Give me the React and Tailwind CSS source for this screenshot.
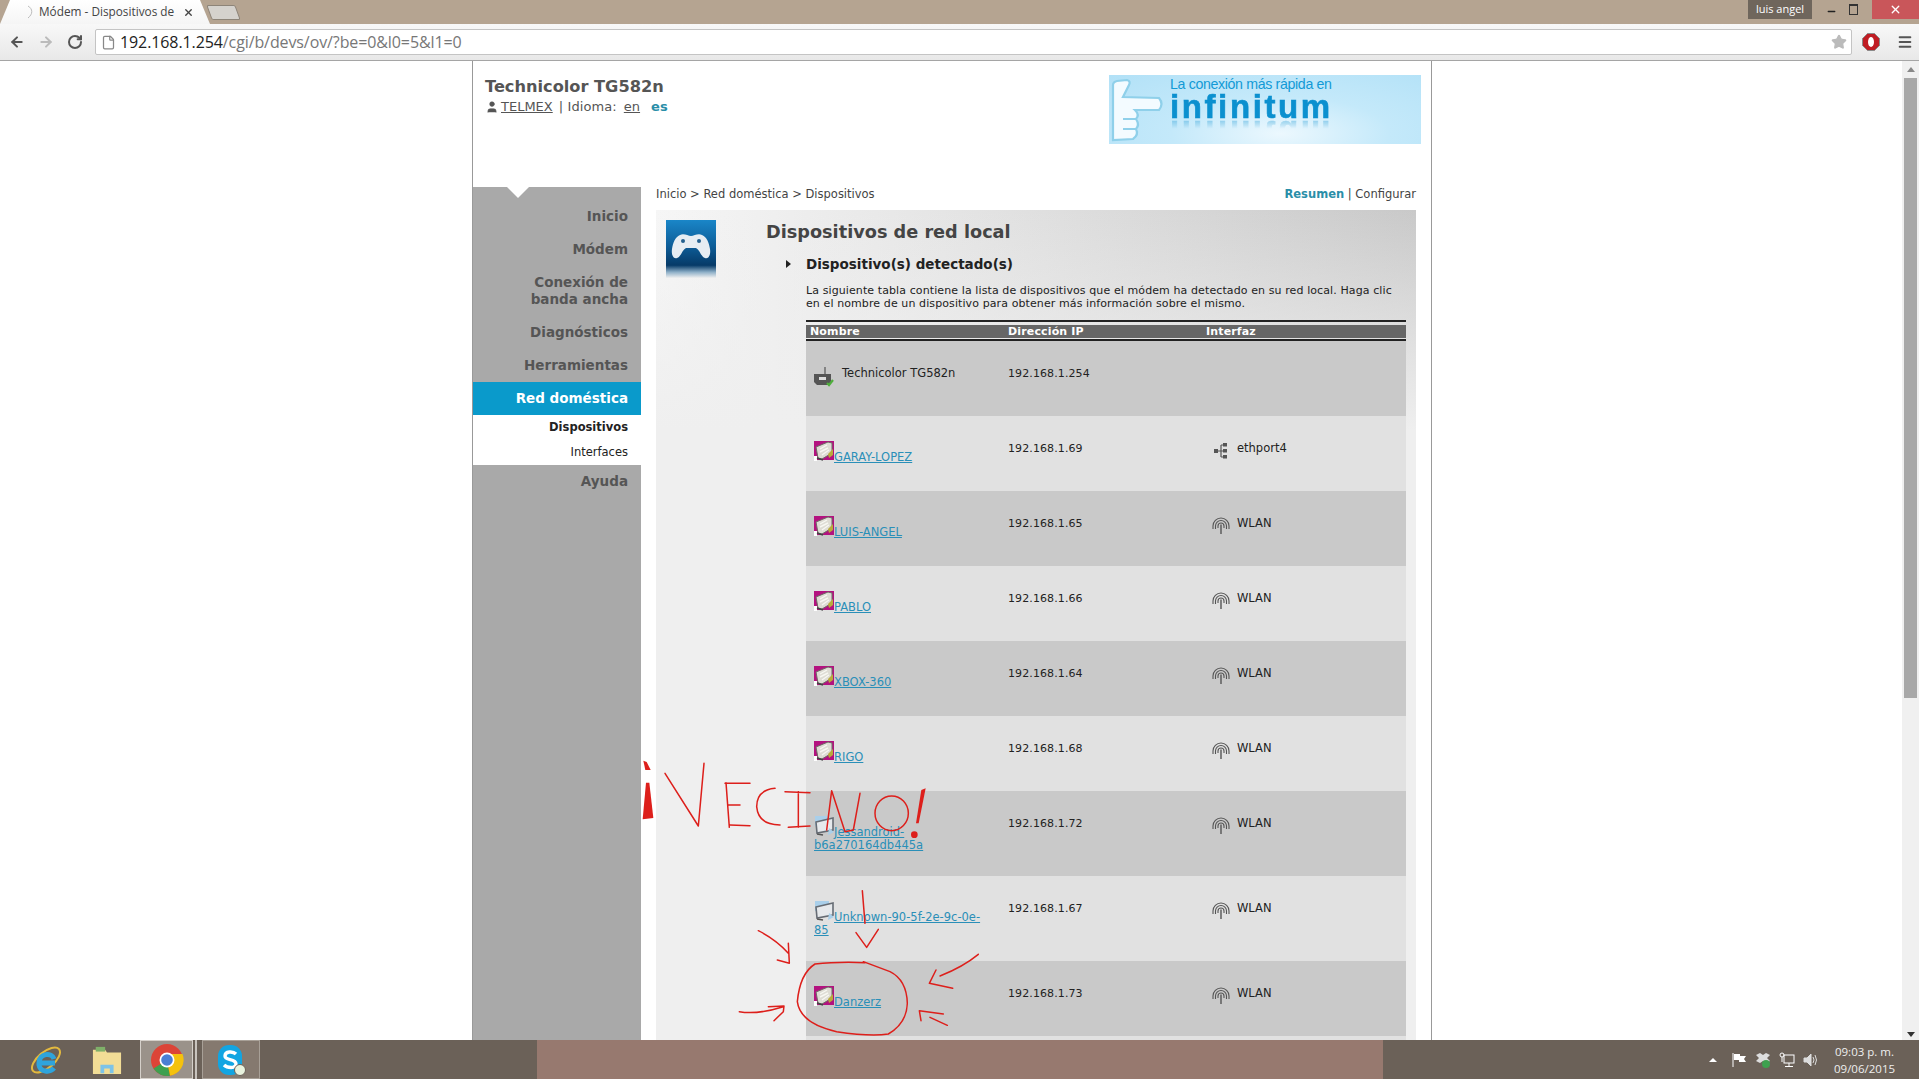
import { ArrowLeft, ArrowRight, RotateCw, File, Star, Menu, X, Minus, User } from 'lucide-react'

const SIDE_TOP = [
  { label: 'Inicio', h: 'h-[33px]' },
  { label: 'Módem', h: 'h-[33px]' },
  { label: 'Conexión de banda ancha', h: 'h-[50px]' },
  { label: 'Diagnósticos', h: 'h-[33px]' },
  { label: 'Herramientas', h: 'h-[33px]' },
]

const ROWS = [
  { name: 'GARAY-LOPEZ', ip: '192.168.1.69', iface: 'ethport4', h: 'h-[75px]' },
  { name: 'LUIS-ANGEL', ip: '192.168.1.65', iface: 'WLAN', h: 'h-[75px]' },
  { name: 'PABLO', ip: '192.168.1.66', iface: 'WLAN', h: 'h-[75px]' },
  { name: 'XBOX-360', ip: '192.168.1.64', iface: 'WLAN', h: 'h-[75px]' },
  { name: 'RIGO', ip: '192.168.1.68', iface: 'WLAN', h: 'h-[75px]' },
  { name: 'Jessandroid-b6a270164db445a', ip: '192.168.1.72', iface: 'WLAN', h: 'h-[85px]', unknown: true },
  { name: 'Unknown-90-5f-2e-9c-0e-85', ip: '192.168.1.67', iface: 'WLAN', h: 'h-[85px]', unknown: true },
  { name: 'Danzerz', ip: '192.168.1.73', iface: 'WLAN', h: 'h-[75px]' },
  { name: '', ip: '', iface: '', h: 'h-[75px]' },
]

function DeviceIcon() {
  return (
    <svg width="20" height="20" viewBox="0 0 20 20" className="inline align-baseline">
      <rect x="0" y="0" width="20" height="19" fill="#b3127f" />
      <rect x="0" y="15" width="3" height="5" fill="#fff" />
      <path d="M2 6 L14 1 L18 2 L18 12 L8 18 L4 17 Z" fill="#dedcd4" stroke="#6d6a64" strokeWidth="1" />
      <path d="M6 8 L13 4 M6 11 L14 7 M8 14 L15 9" stroke="#f7f7f2" strokeWidth="1.4" />
      <path d="M14 13 L19 8 L19 14 L15 17 Z" fill="#b9ab3c" />
      <path d="M3 17 L9 19" stroke="#444" strokeWidth="1.5" />
    </svg>
  )
}

function MonitorIcon() {
  return (
    <svg width="20" height="20" viewBox="0 0 20 20" className="inline align-baseline">
      <rect x="1" y="0" width="14" height="10" fill="#a9cfea" />
      <path d="M2 6 L19 2 L19 14 L3 17 Z" fill="#e6e9ec" stroke="#666c74" strokeWidth="1.6" />
      <path d="M15 12 L20 16 L14 19 Z" fill="#a9cfea" />
      <path d="M3 18 L9 19" stroke="#555" strokeWidth="1.5" />
    </svg>
  )
}

function RouterIcon() {
  return (
    <svg width="20" height="20" viewBox="0 0 20 20" className="shrink-0">
      <path d="M11 0 V7" stroke="#555" strokeWidth="1.2" />
      <path d="M0 7 H17 V15 L14 18 H3 L0 15 Z" fill="#555" />
      <rect x="5" y="10" width="7" height="3" fill="#ddd" />
      <path d="M13 16 L15 18 L19 13" stroke="#4fae3c" strokeWidth="2.2" fill="none" />
    </svg>
  )
}

function EthIcon() {
  return (
    <svg width="14" height="18" viewBox="0 0 14 18" className="shrink-0">
      <path d="M2 9 H7 M7 3 V15 M7 3 H11 M7 9 H11 M7 15 H11" stroke="#555" strokeWidth="1.2" fill="none" />
      <rect x="0" y="7" width="4" height="4" fill="#555" />
      <rect x="9" y="1" width="4" height="3.5" fill="#555" />
      <rect x="9" y="7" width="4" height="3.5" fill="#555" />
      <rect x="9" y="13" width="4" height="3.5" fill="#555" />
    </svg>
  )
}

function WlanIcon() {
  return (
    <svg width="18" height="17" viewBox="0 0 18 17" className="shrink-0" fill="none" stroke="#555">
      <path d="M1 12 V9 A8 8 0 0 1 17 9 V12" strokeWidth="1.1" />
      <path d="M3.5 12 V9 A5.5 5.5 0 0 1 14.5 9 V12" strokeWidth="1.1" />
      <path d="M6 11 V9 A3 3 0 0 1 12 9 V11" strokeWidth="1.1" />
      <path d="M9 7.5 V17" strokeWidth="1.4" />
    </svg>
  )
}

function GamepadTile() {
  return (
    <div className="w-[50px] h-[58px] bg-[linear-gradient(to_bottom,#1a86c8_0%,#0d5d98_45%,#063a68_78%,#8fb0c8_90%,#f0f0f0_100%)] flex justify-center pt-[13px]">
      <svg width="40" height="27" viewBox="0 0 40 27">
        <path d="M9 2 C13 0 17 3 20 3 C23 3 27 0 31 2 C36 4 38 10 39 16 C40 23 37 26 34 25 C30 24 29 17 25 15 H15 C11 17 10 24 6 25 C3 26 0 23 1 16 C2 10 4 4 9 2 Z" fill="#e6edf3" />
        <circle cx="12" cy="8" r="2" fill="#24608f" />
        <circle cx="28" cy="8" r="2" fill="#24608f" />
      </svg>
    </div>
  )
}

function Banner() {
  return (
    <div className="mt-[14px] w-[312px] h-[69px] flex bg-[radial-gradient(ellipse_at_55%_85%,#ecf8fe_0%,#c4e9fa_45%,#b2e1f7_100%)] shrink-0">
      <svg width="60" height="68" viewBox="0 0 60 68" className="shrink-0">
        <path d="M4 10 Q4 7 8 6 L18 5 Q22 6 20 10 L14 22 L50 23 Q55 29 50 35 L26 35 Q31 40 27 44 Q31 50 27 54 Q30 60 24 64 L4 65 Z" fill="#f3fbff" stroke="#8fd0ea" strokeWidth="2.2" />
        <path d="M14 44 H27 M14 54 H27" stroke="#8fd0ea" strokeWidth="2" />
      </svg>
      <div className="ml-[1px] font-['Liberation_Sans',sans-serif] text-[#129ad6] leading-none">
        <div className="text-[14.2px] tracking-[-0.35px] mt-[2px] whitespace-nowrap">La conexión más rápida en</div>
        <div className="w-fit text-[33px] font-bold tracking-[2.6px] mt-[2px] text-[#0b90cf] h-[28px] leading-[28px] [-webkit-text-stroke:0.6px_#0b90cf] [-webkit-box-reflect:below_-3px_linear-gradient(transparent_62%,rgba(255,255,255,0.45))]">infinitum</div>
      </div>
    </div>
  )
}

function TableRow({ row, shade }) {
  return (
    <div className={`grid grid-cols-[202px_198px_200px] ${row.h} ${shade ? 'bg-[#c9c9c9]' : 'bg-[#e1e1e1]'}`}>
      <div className="pl-[8px] pr-[16px] pt-[25px] leading-[13px]">
        {row.name && (row.unknown ? <MonitorIcon /> : <DeviceIcon />)}
        {row.name && <a className="text-[#2a8fb8] underline">{row.name}</a>}
      </div>
      <div className="pt-[26px] leading-[13px] text-[#222] text-[11px] tracking-[0.1px]">{row.ip}</div>
      <div className="pt-[26px] leading-[13px] text-[#222] flex items-start pl-[4px]">
        {row.iface && (
          <>
            <div className="w-[27px] flex justify-center pr-[6px]">
              {row.iface === 'WLAN' ? <WlanIcon /> : <EthIcon />}
            </div>
            {row.iface}
          </>
        )}
      </div>
    </div>
  )
}

function Content() {
  return (
    <div className="flex-1 px-[15px] pl-[15px] min-w-0">
      <div className="h-[23px] flex justify-between items-start text-[11.5px] leading-[14px] text-[#444]">
        <div>Inicio &gt; Red doméstica &gt; Dispositivos</div>
        <div>
          <span className="font-bold text-[#2a8ea8]">Resumen</span> | Configurar
        </div>
      </div>
      <div className="flex bg-[linear-gradient(to_bottom,rgba(240,240,240,0)_0,#efefef_220px),linear-gradient(to_right,#f6f6f6,#c9c9c9)] h-[900px]">
        <div className="w-[110px] pl-[10px] pt-[10px] shrink-0">
          <GamepadTile />
        </div>
        <div className="flex-1 min-w-0">
          <h1 className="text-[17.7px] font-bold text-[#444] leading-[20px] mt-[12px]">Dispositivos de red local</h1>
          <div className="flex items-center mt-[13px] ml-[20px] h-[18px]">
            <div className="w-0 h-0 border-y-[4px] border-y-transparent border-l-[5px] border-l-[#222]" />
            <h2 className="ml-[15px] text-[13.5px] font-bold text-[#222]">Dispositivo(s) detectado(s)</h2>
          </div>
          <div className="ml-[40px] mr-[10px] mt-[11px]">
            <p className="text-[11px] tracking-[0.1px] leading-[13px] text-[#222]">
              La siguiente tabla contiene la lista de dispositivos que el módem ha detectado en su red local. Haga clic en el nombre de un dispositivo para obtener más información sobre el mismo.
            </p>
            <div className="mt-[10px] border-t-2 border-[#222] pt-[2px]">
              <div className="grid grid-cols-[202px_198px_200px] h-[13px] bg-[#666] text-white font-bold text-[11px] tracking-[0.15px] leading-[13px] mt-[1px]">
                <div className="pl-[4px]">Nombre</div>
                <div>Dirección IP</div>
                <div>Interfaz</div>
              </div>
              <div className="border-b-2 border-[#222] h-[3px]" />
            </div>
            <div className="text-[11.5px]">
              <div className="h-[75px] bg-[#c9c9c9] grid grid-cols-[202px_198px_200px]">
                <div className="pl-[8px] pt-[26px] flex items-start text-[#222] leading-[13px]">
                  <RouterIcon />
                  <span className="ml-[8px]">Technicolor TG582n</span>
                </div>
                <div className="pt-[26px] leading-[13px] text-[#222] text-[11px] tracking-[0.1px]">192.168.1.254</div>
                <div />
              </div>
              {ROWS.map((r, i) => (
                <TableRow key={i} row={r} shade={i % 2 === 1} />
              ))}
            </div>
          </div>
        </div>
      </div>
    </div>
  )
}

function Sidebar() {
  return (
    <div className="w-[168px] bg-[#a9a9a9] relative shrink-0 h-[900px] text-right font-bold text-[13.5px] leading-[17px] text-[#555]">
      <div className="absolute left-[34px] top-0 w-0 h-0 border-x-[11px] border-x-transparent border-t-[11px] border-t-white" />
      <div className="h-[13px]" />
      {SIDE_TOP.map((s) => (
        <div key={s.label} className={`${s.h} flex items-center justify-end pr-[13px] pl-[40px]`}>
          {s.label}
        </div>
      ))}
      <div className="h-[33px] bg-[#0a9acb] text-white flex items-center justify-end pr-[13px]">Red doméstica</div>
      <div className="h-[50px] bg-white text-[#222] text-[11.5px]">
        <div className="h-[25px] flex items-center justify-end pr-[13px]">Dispositivos</div>
        <div className="h-[25px] flex items-center justify-end pr-[13px] font-normal">Interfaces</div>
      </div>
      <div className="h-[32px] flex items-center justify-end pr-[13px]">Ayuda</div>
    </div>
  )
}

function TitleBar() {
  return (
    <div className="h-[24px] bg-[#b5a491] flex font-['Open_Sans',sans-serif] shrink-0">
      <div className="w-[210px] h-full flex items-center bg-[linear-gradient(to_bottom,#ffffff,#f5f5f5)] [clip-path:polygon(10px_0,200px_0,210px_100%,0_100%)] pl-[27px]">
        <svg width="8" height="14" viewBox="0 0 8 14" fill="none" stroke="#bbb" strokeWidth="1">
          <path d="M1 1 C6 4 6 9 1 13" />
        </svg>
        <span className="ml-[4px] text-[11.8px] text-[#444] whitespace-nowrap">Módem - Dispositivos de</span>
        <X size={11} strokeWidth={3} className="ml-[9px] text-[#444]" />
      </div>
      <div className="ml-[-1px] mt-[5px] w-[29px] h-[15px] bg-[#d5d2cd] border border-[#8d8478] rounded-[2px] [transform:skewX(20deg)]" />
      <div className="flex-1" />
      <div className="w-[64px] h-[19px] bg-[#6f665c] text-white text-[11px] flex items-center justify-center">luis angel</div>
      <div className="w-[60px] h-[19px] flex items-center justify-center gap-[12px] text-[#222]">
        <Minus size={11} strokeWidth={3} className="mt-[4px]" />
        <div className="w-[9px] h-[11px] border border-[#333] border-t-2" />
      </div>
      <div className="w-[47px] h-[19px] bg-[#c9565a] text-white flex items-center justify-center">
        <X size={13} strokeWidth={2.5} />
      </div>
    </div>
  )
}

function Toolbar() {
  return (
    <div className="h-[37px] bg-[linear-gradient(to_bottom,#f8f8f8,#e8e8e8)] border-b border-[#a5a5a5] flex items-center shrink-0">
      <div className="w-[95px] flex items-center pl-[9px] gap-[13px]">
        <ArrowLeft size={16} strokeWidth={3} className="text-[#555]" />
        <ArrowRight size={16} strokeWidth={3} className="text-[#bbb]" />
        <RotateCw size={16} strokeWidth={3} className="text-[#555]" />
      </div>
      <div className="w-[1757px] h-[26px] bg-white border border-[#c4c4c4] rounded-[2px] flex items-center pl-[5px] font-['Open_Sans',sans-serif] text-[16px]">
        <File size={15} className="text-[#888]" />
        <span className="ml-[4px] text-[#222] tracking-[-0.1px]">192.168.1.254</span>
        <span className="text-[#777] tracking-[-0.1px]">/cgi/b/devs/ov/?be=0&amp;l0=5&amp;l1=0</span>
        <div className="flex-1" />
        <Star size={16} className="text-[#bbb] mr-[4px]" fill="#bbb" />
      </div>
      <div className="flex-1 flex items-center justify-between pl-[10px] pr-[6px]">
        <svg width="18" height="18" viewBox="0 0 18 18">
          <path d="M5.5 0.5 H12.5 L17.5 5.5 V12.5 L12.5 17.5 H5.5 L0.5 12.5 V5.5 Z" fill="#c01d24" stroke="#8a8a8a" />
          <ellipse cx="9" cy="9" rx="3" ry="5" fill="#fff" />
        </svg>
        <Menu size={16} strokeWidth={3} className="text-[#555]" />
      </div>
    </div>
  )
}

function Scrollbar() {
  return (
    <div className="absolute right-0 top-0 bottom-0 w-[17px] bg-[#f0f0f0] flex flex-col items-center">
      <div className="mt-[6px] w-0 h-0 border-x-[4px] border-x-transparent border-b-[5px] border-b-[#888]" />
      <div className="mt-[6px] w-[13px] h-[620px] bg-[#a8a8a8]" />
      <div className="flex-1" />
      <div className="mb-[3px] w-0 h-0 border-x-[4px] border-x-transparent border-t-[5px] border-t-[#333]" />
    </div>
  )
}

function Taskbar() {
  return (
    <div className="h-[39px] shrink-0 flex bg-[#6b6158] font-['Open_Sans',sans-serif]">
      <div className="w-[537px] flex items-center">
        <div className="w-[92px] flex justify-center">
          <svg width="34" height="34" viewBox="0 0 34 34" fill="none">
            <ellipse cx="17" cy="17" rx="17" ry="8" transform="rotate(-40 17 17)" stroke="#e3b93e" strokeWidth="2" />
            <path d="M26 20 H10 C10 10 23 9 25 16 M10 22 C11 29 21 30 25 25" stroke="#2fa4dc" strokeWidth="5" />
          </svg>
        </div>
        <div className="w-[30px] flex justify-center">
          <svg width="32" height="32" viewBox="0 0 32 32">
            <path d="M1 5 H14 L16 8 H31 V31 H1 Z" fill="#f2dd96" />
            <rect x="4" y="2" width="10" height="5" fill="#7fb069" />
            <path d="M9 30 V21 H23 V30 H19 V25 H13 V30 Z" fill="#7cc3e8" />
          </svg>
        </div>
        <div className="ml-[18px] w-[53px] h-[39px] bg-[#9a928a] border border-[#d5d0ca] flex items-center justify-center">
          <svg width="34" height="34" viewBox="0 0 34 34">
            <circle cx="17" cy="17" r="16" fill="#dc4437" />
            <path d="M17 17 L3.5 25.5 A16 16 0 0 0 20 32.7 Z" fill="#3ea04f" />
            <path d="M17 17 L20 32.7 A16 16 0 0 0 32.5 11 L17 11 Z" fill="#f4c20d" />
            <circle cx="17" cy="17" r="7.5" fill="#fff" />
            <circle cx="17" cy="17" r="5.8" fill="#4a7fd4" />
          </svg>
        </div>
        <div className="ml-[2px] w-[2px] h-[39px] bg-[#c8c3bd]" />
        <div className="ml-[5px] w-[58px] h-[39px] bg-[#85796f] border border-[#a8a097] flex items-center justify-center">
          <svg width="32" height="34" viewBox="0 0 32 34">
            <rect x="3" y="2" width="24" height="30" rx="11" fill="#12a5e2" />
            <path d="M21 11 C18 8 10 8 10 13 C10 18 21 15 21 21 C21 26 12 25 9 22" stroke="#fff" strokeWidth="3.4" fill="none" />
            <circle cx="25" cy="27" r="5.5" fill="#e9f3de" stroke="#6b6158" />
          </svg>
        </div>
      </div>
      <div className="w-[846px] bg-[#97796f]" />
      <div className="flex-1 flex items-center justify-end pr-[25px] text-[#eee]">
        <div className="w-0 h-0 border-x-[4px] border-x-transparent border-b-[4px] border-b-white mr-[14px]" />
        <svg width="16" height="16" viewBox="0 0 16 16" className="mr-[8px]">
          <path d="M2 1 V15" stroke="#fff" />
          <path d="M3 2 H9 V4 H15 L13 7 L15 10 H8 V8 H3 Z" fill="#fff" />
        </svg>
        <svg width="16" height="16" viewBox="0 0 16 16" className="mr-[8px]">
          <path d="M1 3 L5 1 L8 3 L11 1 L15 3 L12 6 L15 9 L11 11 L8 9 L5 11 L1 9 L4 6 Z" fill="#ddd" />
          <circle cx="11" cy="12" r="4" fill="#3ea04f" />
        </svg>
        <svg width="16" height="16" viewBox="0 0 16 16" fill="none" stroke="#fff" className="mr-[8px]">
          <rect x="5" y="3" width="10" height="8" />
          <circle cx="3" cy="3" r="2" />
          <path d="M3 5 V10 M10 11 V14 M6 14.5 H14" />
        </svg>
        <svg width="16" height="16" viewBox="0 0 16 16" fill="none" stroke="#ddd" className="mr-[15px]">
          <path d="M1 6 H4 L8 2 V14 L4 10 H1 Z" fill="#ddd" />
          <path d="M10 5 Q12 8 10 11 M12 3 Q15 8 12 13" />
        </svg>
        <div className="w-[60px] text-[11.5px] leading-[17px] text-right">
          <div>09:03 p. m.</div>
          <div>09/06/2015</div>
        </div>
      </div>
    </div>
  )
}

// the red marks were drawn freehand over the screenshot, coordinates are zoom px (3x)
function Scribbles() {
  return (
    <svg
      viewBox="0 0 1260 1020"
      role="img"
      aria-label="¡VECINO!"
      className="absolute left-[630px] top-[740px] w-[420px] h-[340px] pointer-events-none"
      fill="none"
      stroke="#dd1f1b"
      strokeWidth="4.5"
      strokeLinecap="round"
      strokeLinejoin="round"
    >
      <path d="M40 62 L50 66 L62 90 L46 90 Z" fill="#dd1f1b" stroke="none" />
      <path d="M48 128 L58 128 L70 234 L38 238 Z" fill="#dd1f1b" stroke="none" />
      <path d="M105 100 L205 258 L222 70" />
      <path d="M288 128 L298 262 M285 130 L360 130 M295 195 L330 195 M300 255 L360 257" />
      <path d="M435 145 Q380 150 380 200 Q385 255 450 255" />
      <path d="M465 155 L540 158 M505 155 L505 262 M475 262 L540 258" />
      <path d="M590 270 L605 152 L645 275 L670 270 L690 160" />
      <ellipse cx="785" cy="220" rx="50" ry="52" />
      <path d="M887 145 L874 150 L858 250 L866 250 Z" fill="#dd1f1b" stroke="none" />
      <circle cx="853" cy="284" r="10" fill="#dd1f1b" stroke="none" />
      <path d="M697 452 L705 550 M678 578 L710 622 L745 568" />
      <path d="M385 572 Q440 600 475 640 M475 610 L478 670 L442 660" />
      <path d="M1045 643 Q1000 680 930 708 M918 690 L898 730 L968 745" />
      <path d="M328 815 Q380 825 460 800 M415 800 L462 798 L460 815 L432 842" />
      <path d="M940 822 L868 812 L873 842 M900 832 L952 856" />
      <path d="M705 668 Q620 665 555 672 Q510 700 502 785 Q510 850 620 875 Q720 890 775 882 Q830 850 832 790 Q830 720 780 695 Q740 680 700 665" />
    </svg>
  )
}

export default function App() {
  return (
    <div className="w-[1919px] h-[1079px] flex flex-col overflow-hidden relative bg-white font-['DejaVu_Sans',sans-serif]">
      <TitleBar />
      <Toolbar />
      <div className="flex-1 relative overflow-hidden min-h-0">
        <div className="ml-[472px] w-[960px] h-full border-x border-[#999]">
          <div className="h-[126px] flex justify-between pl-[12px] pr-[10px]">
            <div className="pt-[16px]">
              <div className="font-bold text-[16.2px] leading-[20px] text-[#555]">Technicolor TG582n</div>
              <div className="flex items-center text-[13px] leading-[16px] text-[#555] mt-[2px]">
                <User size={14} fill="#555" strokeWidth={1} />
                <span className="underline ml-[2px]">TELMEX</span>
                <span className="ml-[6px] tracking-[0.1px]">| Idioma:</span>
                <span className="underline ml-[7px]">en</span>
                <span className="font-bold text-[#2a8ea8] ml-[11px]">es</span>
              </div>
            </div>
            <Banner />
          </div>
          <div className="flex h-[900px]">
            <Sidebar />
            <Content />
          </div>
        </div>
        <Scrollbar />
      </div>
      <Taskbar />
      <Scribbles />
    </div>
  )
}
